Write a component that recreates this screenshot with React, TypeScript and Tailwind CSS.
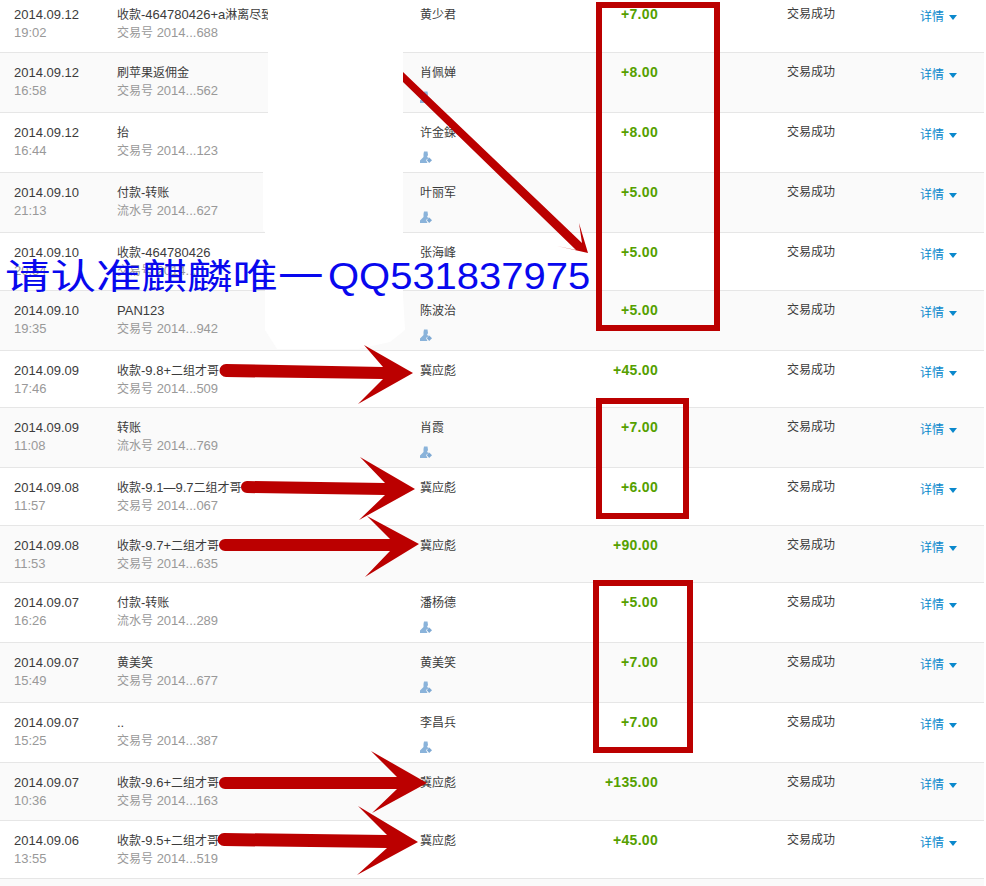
import React from 'react';

type Row = {
  date: string;
  time: string;
  title: string;
  sub: string;
  name: string;
  amount: string;
  height: string;
  icon?: boolean;
};

const rows: Row[] = [
  { date: '2014.09.12', time: '19:02', title: '收款-464780426+a淋离尽致', sub: '交易号 2014...688', name: '黄少君', amount: '+7.00', height: 'h-[58px]' },
  { date: '2014.09.12', time: '16:58', title: '刷苹果返佣金', sub: '交易号 2014...562', name: '肖佩婵', amount: '+8.00', height: 'h-[60px]', icon: true },
  { date: '2014.09.12', time: '16:44', title: '抬', sub: '交易号 2014...123', name: '许金鍊', amount: '+8.00', height: 'h-[60px]', icon: true },
  { date: '2014.09.10', time: '21:13', title: '付款-转账', sub: '流水号 2014...627', name: '叶丽军', amount: '+5.00', height: 'h-[60px]', icon: true },
  { date: '2014.09.10', time: '20:54', title: '收款-464780426', sub: '交易号 2014...', name: '张海峰', amount: '+5.00', height: 'h-[58px]' },
  { date: '2014.09.10', time: '19:35', title: 'PAN123', sub: '交易号 2014...942', name: '陈波治', amount: '+5.00', height: 'h-[60px]', icon: true },
  { date: '2014.09.09', time: '17:46', title: '收款-9.8+二组才哥', sub: '交易号 2014...509', name: '冀应彪', amount: '+45.00', height: 'h-[57px]' },
  { date: '2014.09.09', time: '11:08', title: '转账', sub: '流水号 2014...769', name: '肖霞', amount: '+7.00', height: 'h-[60px]', icon: true },
  { date: '2014.09.08', time: '11:57', title: '收款-9.1—9.7二组才哥', sub: '交易号 2014...067', name: '冀应彪', amount: '+6.00', height: 'h-[58px]' },
  { date: '2014.09.08', time: '11:53', title: '收款-9.7+二组才哥', sub: '交易号 2014...635', name: '冀应彪', amount: '+90.00', height: 'h-[57px]' },
  { date: '2014.09.07', time: '16:26', title: '付款-转账', sub: '流水号 2014...289', name: '潘杨德', amount: '+5.00', height: 'h-[60px]', icon: true },
  { date: '2014.09.07', time: '15:49', title: '黄美笑', sub: '交易号 2014...677', name: '黄美笑', amount: '+7.00', height: 'h-[60px]', icon: true },
  { date: '2014.09.07', time: '15:25', title: '..', sub: '交易号 2014...387', name: '李昌兵', amount: '+7.00', height: 'h-[60px]', icon: true },
  { date: '2014.09.07', time: '10:36', title: '收款-9.6+二组才哥', sub: '交易号 2014...163', name: '冀应彪', amount: '+135.00', height: 'h-[58px]' },
  { date: '2014.09.06', time: '13:55', title: '收款-9.5+二组才哥', sub: '交易号 2014...519', name: '冀应彪', amount: '+45.00', height: 'h-[58px]' },
];

// latin runs read a bit larger than the 12px cjk in the original
function Mixed({ text }: { text: string }) {
  const parts = text.match(/[\u4e00-\u9fff—]+|[^\u4e00-\u9fff—]+/g) || [];
  return (
    <>
      {parts.map((part, i) =>
        /[\u4e00-\u9fff—]/.test(part) ? (
          <span key={i} className="text-[12px]">{part}</span>
        ) : (
          <span key={i} className="text-[13px]">{part}</span>
        )
      )}
    </>
  );
}

function PersonIcon() {
  return (
    <svg width="12" height="12" viewBox="0 0 12 12" className="mt-[9px] block">
      <path d="M4 0.5h3.5L8 4 7 6l2 1-3 2 1.5 3H0V9.5L3.5 6 3.5 3z" fill="#8ab3da" />
      <path d="M9.2 6.5l2.8 2.7-2.8 2.8-2.4-2.8z" fill="#7ea9d4" />
    </svg>
  );
}

function Caret() {
  return (
    <svg width="8" height="5" viewBox="0 0 8 5" className="ml-[5px]">
      <path d="M0 0h8L4 5z" fill="#0a88cc" />
    </svg>
  );
}

function TableRow({ row, index }: { row: Row; index: number }) {
  const bg = index % 2 === 0 ? 'bg-white' : 'bg-[#fafafa]';
  return (
    <div
      className={`${row.height} ${bg} grid grid-cols-[117px_303px_140px_98px_129px_1fr] border-b border-[#e6e6e6] pt-[11px] leading-[18px] text-[#3c3c3c]`}
    >
      <div className="pl-[14px]">
        <div className="text-[13px]">{row.date}</div>
        <div className="text-[13px] text-[#999999]">{row.time}</div>
      </div>
      <div>
        <div className="whitespace-nowrap text-[13px]"><Mixed text={row.title} /></div>
        <div className="whitespace-nowrap text-[13px] text-[#999999]"><Mixed text={row.sub} /></div>
      </div>
      <div>
        <div className="text-[12px]">{row.name}</div>
        {row.icon && <PersonIcon />}
      </div>
      <div className="-mt-px text-right text-[14px] font-bold tracking-[0.3px] text-[#55a000]">{row.amount}</div>
      <div />
      <div className="-mt-px text-[12px]">
        <div>交易成功</div>
      </div>
    </div>
  );
}

export default function App() {
  return (
    <div className="relative h-[886px] w-[986px] overflow-hidden bg-white font-['Liberation_Sans','Noto_Sans_CJK_SC',sans-serif]">
      <div className="mt-[-5px] w-[984px]">
        {rows.map((row, i) => (
          <div key={i} className="relative">
            <TableRow row={row} index={i} />
            <div className="absolute left-[920px] top-[13px] flex items-center text-[12px] leading-[18px] text-[#0a88cc]">
              详情
              <Caret />
            </div>
          </div>
        ))}
        <div className="h-[10px] bg-[#fafafa]" />
      </div>

      {/* everything below was painted onto the screenshot */}
      <svg width="986" height="886" viewBox="0 0 986 886" className="absolute left-0 top-0">
        <polygon
          fill="#ffffff"
          points="268,0 403,0 403,295 405,330 390,342 358,349 277,349 265,330 265,232 263,230 263,172 268,170"
        />
        <g fill="#bb0000">
          <polygon points="403,72 403,82 576,250 557,246 588,253 579,223 582,243" />
          <path d="M226 364 L383 367 L364 345 L413 373 L358 404 L383 379 L226 377 a6.5 6.5 0 0 1 0-13z" />
          <path d="M247 481 L385 483 L360 457 L415 489 L359 520 L385 495 L247 493 a6 6 0 0 1 0-12z" />
          <path d="M225 539 L390 539 L367 516 L419 544 L365 577 L390 551 L225 551 a6 6 0 0 1 0-12z" />
          <path d="M225 777 L397 777 L371 751 L427 783 L372 813 L397 789 L225 789 a6 6 0 0 1 0-12z" />
          <path d="M224 833 L387 835 L358 806 L418 842 L357 875 L387 848 L224 846 a6.5 6.5 0 0 1 0-13z" />
        </g>
      </svg>

      <div className="absolute left-[596px] top-[2px] h-[329px] w-[124px] border-[6px] border-[#bb0000]" />
      <div className="absolute left-[596px] top-[398px] h-[121px] w-[93px] border-[6px] border-[#bb0000]" />
      <div className="absolute left-[593px] top-[580px] h-[173px] w-[100px] border-[6px] border-[#bb0000]" />

      <div className="absolute left-[5px] top-[255px] flex items-center whitespace-nowrap leading-[44px] text-[#0808ee]">
        <span className="w-[323px] origin-left scale-x-[1.3] text-[35px]">请认准麒麟唯一</span>
        <span className="origin-left scale-x-[1.11] text-[36px]">QQ531837975</span>
      </div>
    </div>
  );
}
